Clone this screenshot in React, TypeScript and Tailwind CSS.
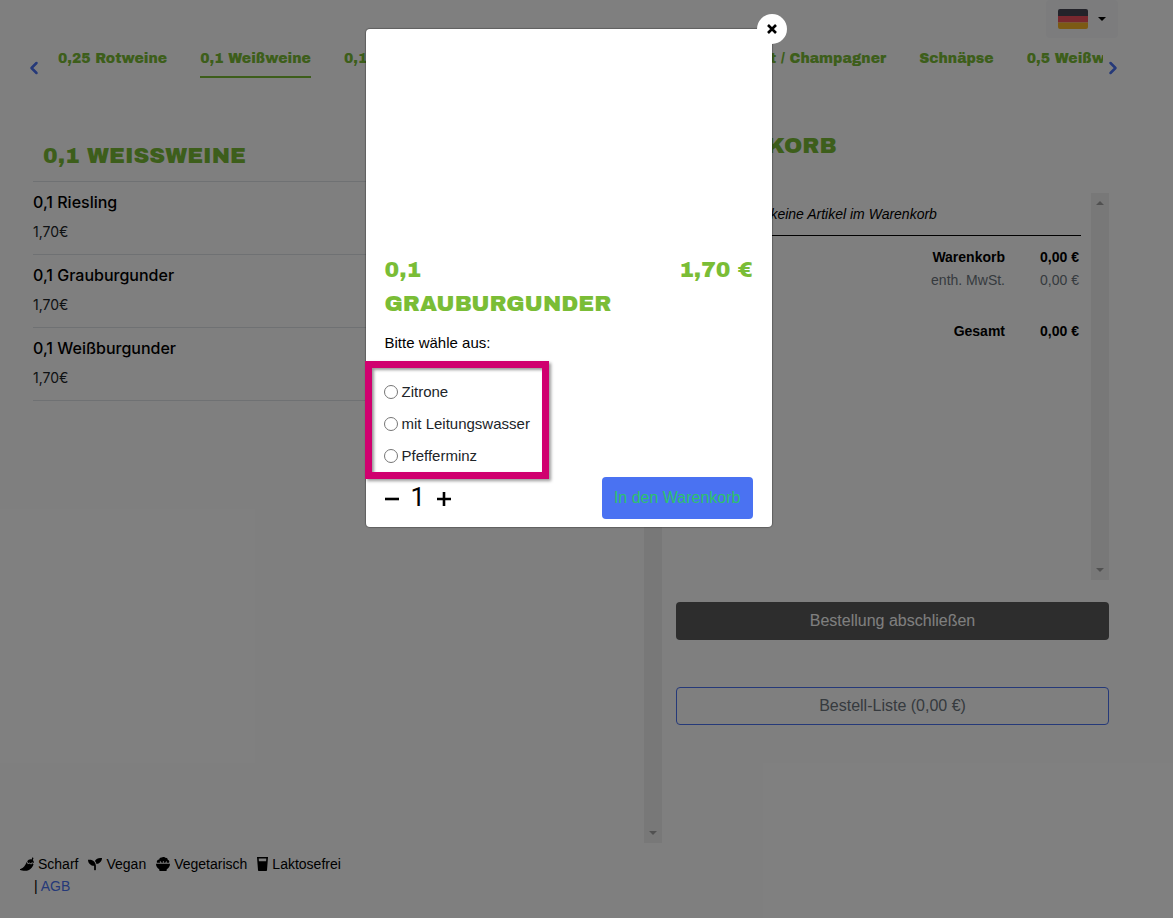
import { useState } from 'react';
import { FaSeedling } from 'react-icons/fa';
import { ChevronLeft, ChevronRight } from 'lucide-react';

const categories = [
  '0,25 Rotweine',
  '0,1 Weißweine',
  '0,1 Rotweine',
  '0,1 Roséweine',
  'Spirituosen',
  'Sekt / Champagner',
  'Schnäpse',
  '0,5 Weißweine',
];

const wines = [
  { name: '0,1 Riesling', price: '1,70€' },
  { name: '0,1 Grauburgunder', price: '1,70€' },
  { name: '0,1 Weißburgunder', price: '1,70€' },
];

const options = ['Zitrone', 'mit Leitungswasser', 'Pfefferminz'];

function PepperIcon() {
  return (
    <svg viewBox="0 0 14 14" className="size-3.5" fill="currentColor" aria-hidden="true">
      <path d="M12.300.3l1.200.6c-.3.900-.4 1.500-.7 2.100.9.900 1.200 2 1 3.100l-1.900-.8-.9 1.100-1.600-.9-1.200.7-1-1.900c1-1.500 2.700-2.300 4.400-1.800.3-.6.500-1.300.7-2.200z" />
      <path d="M6.700 5.100l1.200 2.200 1.500-.9 1.800 1.100 1-1.200 1.300.6c-.5 3-3.500 6.800-8.300 6.800-2.200 0-4.200-.3-5-.8-.4-.3-.3-.9.200-1 3.300-.6 4.700-3.300 6.300-6.800z" />
    </svg>
  );
}

function BowlIcon() {
  return (
    <svg viewBox="0 0 14 14" className="size-3.5" fill="currentColor" aria-hidden="true">
      <path d="M1 5.800a2.300 2.300 0 0 1 2.200-3.200A2.300 2.300 0 0 1 6 .6a2.200 2.200 0 0 1 3.200.2 2.200 2.200 0 0 1 2.600 2A2.200 2.200 0 0 1 13 5.800h-2.400l.3-1.300-.8-.2-.7 1.500H7.700V4h-.8v1.800H5.600L4.300 4.100l-.6.500.7 1.200z" />
      <path d="M0 6.800h14c0 2.500-1.300 4.500-3.200 5.500l-.3 1.700h-7l-.3-1.700C1.300 11.300 0 9.300 0 6.800z" />
    </svg>
  );
}

function GlassIcon() {
  return (
    <svg viewBox="0 0 11 14" className="h-3.5 w-[11px]" fill="currentColor" aria-hidden="true">
      <path fillRule="evenodd" d="M0 0h11l-1 13.200a.8.8 0 0 1-.8.8H1.800a.8.8 0 0 1-.8-.8zM1.700 1.500l.2 2.800h7.200l.2-2.800z" />
    </svg>
  );
}

function Scrollbar() {
  return (
    <div className="flex w-4.5 shrink-0 flex-col items-center justify-between bg-[#f1f1f1] py-2" aria-hidden="true">
      <svg viewBox="0 0 8 4" className="h-1 w-2 fill-[#a3a3a3]"><path d="M0 4l4-4 4 4z" /></svg>
      <svg viewBox="0 0 8 4" className="h-1 w-2 fill-[#a3a3a3]"><path d="M0 0l4 4 4-4z" /></svg>
    </div>
  );
}

function CategoryNav() {
  return (
    <nav className="flex items-start pt-1 pr-3.5 pl-6">
      <button aria-label="Zurück" className="mt-4 text-[#4a72f2]">
        <ChevronLeft className="size-5" strokeWidth={3} />
      </button>
      <div className="ml-3.5 flex min-w-0 flex-1 gap-[33px] overflow-hidden">
        {categories.map((name, i) => (
          <a
            key={name}
            href="#"
            className={`h-9 shrink-0 border-b-2 pt-[7px] font-['Archivo_Black',Inter,sans-serif] text-sm whitespace-nowrap text-[#7abd36] ${i === 1 ? 'border-[#7abd36]' : 'border-transparent'}`}
          >
            {name}
          </a>
        ))}
      </div>
      <button aria-label="Weiter" className="mt-4 text-[#4a72f2]">
        <ChevronRight className="size-5" strokeWidth={3} />
      </button>
    </nav>
  );
}

function ProductDialog({ onClose }: { onClose: () => void }) {
  const [count, setCount] = useState(1);

  return (
    <div role="dialog" aria-modal="true" className="relative w-[406px] rounded-sm bg-white px-[19px] pb-2 shadow-[0_0_1px_1px_rgba(0,0,0,0.25)]">
      <button aria-label="Schließen" onClick={onClose} className="absolute -top-[15px] -right-[15px] grid size-7.5 place-items-center rounded-full bg-white">
        <svg viewBox="0 0 10 10" className="size-2.5 stroke-black" strokeWidth="2.6">
          <path d="M1 1l8 8M9 1l-8 8" />
        </svg>
      </button>
      <div className="h-56" />
      <div className="flex justify-between font-['Archivo_Black',Inter,sans-serif] text-[22px] leading-[34px] text-[#7abd36]">
        <h2 className="w-60">0,1 GRAUBURGUNDER</h2>
        <span>1,70 €</span>
      </div>
      <fieldset>
        <legend className="pt-2.5 text-[15px] leading-6">Bitte wähle aus:</legend>
        <div className="mt-1.5 -mb-0.5 -ml-5 w-46 border-[7px] border-[#d0006f] pt-2 pl-3 shadow-[2px_2px_3px_rgba(0,0,0,0.4),inset_2px_2px_3px_rgba(0,0,0,0.4)]">
          {options.map((option) => (
            <label key={option} className="flex h-8 items-center gap-1 text-[15px] whitespace-nowrap text-[#212529]">
              <input type="radio" name="option" className="size-3.5" />
              {option}
            </label>
          ))}
        </div>
      </fieldset>
      <div className="flex items-start justify-between">
        <div className="flex items-center gap-3 pt-0.5 font-[Roboto] text-[26px] leading-9">
          <button aria-label="Weniger" onClick={() => setCount(Math.max(1, count - 1))}>
            <svg viewBox="0 0 14 14" className="mt-1 size-3.5 stroke-black" strokeWidth="2.6"><path d="M0 7h14" /></svg>
          </button>
          <span>{count}</span>
          <button aria-label="Mehr" onClick={() => setCount(count + 1)}>
            <svg viewBox="0 0 14 14" className="mt-1 size-3.5 stroke-black" strokeWidth="2.6"><path d="M0 7h14M7 0v14" /></svg>
          </button>
        </div>
        <button className="h-10.5 rounded-sm bg-[#4a72f2] px-3 text-base text-[#2dc26b]">In den Warenkorb</button>
      </div>
    </div>
  );
}

export default function App() {
  const [open, setOpen] = useState(true);

  return (
    <div className="relative min-h-screen bg-white pr-9 font-['Liberation_Sans',Arial,sans-serif] text-black">
      <header className="flex justify-end pr-[19px]">
        <button className="flex h-9.5 items-center gap-2.5 rounded-sm bg-[#f8f9fa] px-3" aria-label="Sprache">
          <svg viewBox="0 0 30 20" className="h-5 w-7.5 overflow-hidden rounded-xs">
            <path fill="#464655" d="M0 0h30v7H0z" />
            <path fill="#f0505e" d="M0 7h30v6.500H0z" />
            <path fill="#f9b428" d="M0 13.500h30V20H0z" />
          </svg>
          <svg viewBox="0 0 8 4" className="h-1 w-2"><path d="M0 0h8L4 4z" /></svg>
        </button>
      </header>
      <CategoryNav />

      <main className="flex pt-[51px]">
        <section className="flex h-[714px] min-w-0 flex-1 pl-[33px]">
          <div className="flex-1">
            <h1 className="px-2.5 pt-[11px] pb-[9px] font-['Archivo_Black',Inter,sans-serif] text-[22px] leading-8 text-[#7abd36]">0,1 WEISSWEINE</h1>
            <ul className="border-t border-[#dee2e6] font-[Inter]">
              {wines.map((wine) => (
                <li key={wine.name} className="h-[73px] border-b border-[#dee2e6] pt-2">
                  <h3 className="text-base leading-6 font-medium">{wine.name}</h3>
                  <p className="pt-2 text-sm leading-5 text-[#212529]">{wine.price}</p>
                </li>
              ))}
            </ul>
          </div>
          <Scrollbar />
        </section>

        <aside className="w-[475px] pr-7 pl-3.5">
          <h2 className="pt-px font-['Archivo_Black',Inter,sans-serif] text-[22px] leading-8 text-[#7abd36]">WARENKORB</h2>
          <div className="mt-[31px] flex h-[387px]">
            <div className="flex-1 pr-2.5 text-sm">
              <p className="border-b border-black py-3 pl-2 leading-[18px] italic">Du hast noch keine Artikel im Warenkorb</p>
              <table className="mt-2.5 w-full text-right leading-[23px]">
                <tbody>
                  <tr className="font-bold"><td>Warenkorb</td><td className="w-19 pr-0.5">0,00 €</td></tr>
                  <tr className="text-[#6c757d]"><td>enth. MwSt.</td><td className="pr-0.5">0,00 €</td></tr>
                  <tr className="font-bold"><td className="pt-7">Gesamt</td><td className="pt-7 pr-0.5">0,00 €</td></tr>
                </tbody>
              </table>
            </div>
            <Scrollbar />
          </div>
          <button className="mt-5.5 h-9.5 w-full rounded-sm bg-[#5a5a5a] text-base text-white">Bestellung abschließen</button>
          <button className="mt-[47px] h-9.5 w-full rounded-sm border border-[#4a72f2] text-base text-[#6c757d]">Bestell-Liste (0,00 €)</button>
        </aside>
      </main>

      <footer className="px-5 pt-2.5 text-sm leading-[22px]">
        <div className="flex gap-2.5">
          <span className="flex items-center gap-1"><PepperIcon />Scharf</span>
          <span className="flex items-center gap-1"><FaSeedling />Vegan</span>
          <span className="flex items-center gap-1"><BowlIcon />Vegetarisch</span>
          <span className="flex items-center gap-1"><GlassIcon />Laktosefrei</span>
        </div>
        <p className="pl-3.5">| <a href="#" className="text-[#4a72f2]">AGB</a></p>
      </footer>

      {open && (
        <div className="absolute inset-0 flex items-start justify-center bg-black/50 pt-[29px] pr-9">
          <ProductDialog onClose={() => setOpen(false)} />
        </div>
      )}
    </div>
  );
}
